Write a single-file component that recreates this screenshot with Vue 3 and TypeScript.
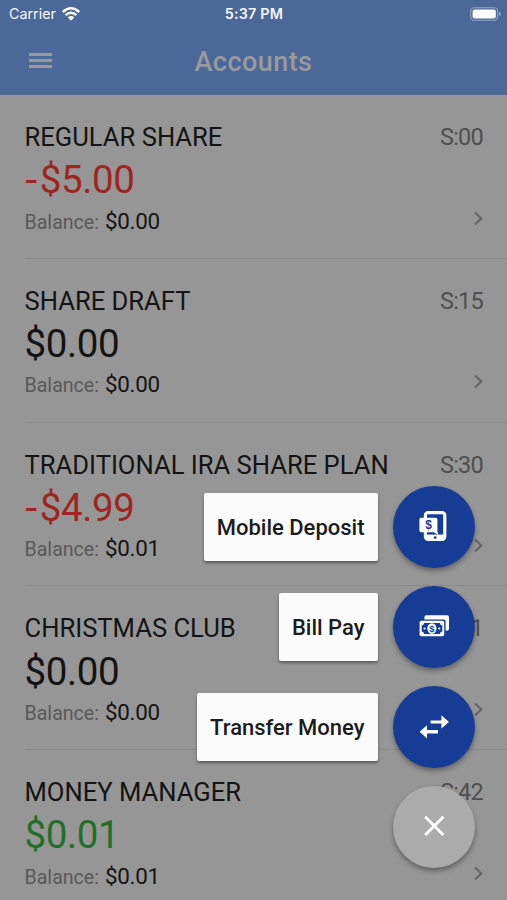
<script setup lang="ts">
interface Account {
  name: string
  suffix: string
  amount: string
  balance: string
  tone: 'neg' | 'zero' | 'pos'
}

interface Action {
  label: string
  icon: 'deposit' | 'bill' | 'transfer'
}

const accounts: Account[] = [
  { name: 'REGULAR SHARE', suffix: 'S:00', amount: '$5.00', balance: '$0.00', tone: 'neg' },
  { name: 'SHARE DRAFT', suffix: 'S:15', amount: '$0.00', balance: '$0.00', tone: 'zero' },
  { name: 'TRADITIONAL IRA SHARE PLAN', suffix: 'S:30', amount: '$4.99', balance: '$0.01', tone: 'neg' },
  { name: 'CHRISTMAS CLUB', suffix: 'S:41', amount: '$0.00', balance: '$0.00', tone: 'zero' },
  { name: 'MONEY MANAGER', suffix: 'S:42', amount: '$0.01', balance: '$0.01', tone: 'pos' },
]

const actions: Action[] = [
  { label: 'Mobile Deposit', icon: 'deposit' },
  { label: 'Bill Pay', icon: 'bill' },
  { label: 'Transfer Money', icon: 'transfer' },
]
</script>

<template>
  <div class="screen">
    <header class="header">
      <div class="status">
        <div class="carrier">
          <span>Carrier</span>
          <svg class="wifi" viewBox="0 0 18 14">
            <path d="M0.8 5 Q9 -2.4 17.2 5" />
            <path d="M3.6 8.2 Q9 3.4 14.4 8.2" />
            <path class="solid" d="M9 13.8 L5.8 10.4 Q9 7.6 12.2 10.4 Z" />
          </svg>
        </div>
        <span class="time">5:37 PM</span>
        <svg class="battery" viewBox="0 0 31 14">
          <rect class="shell" x="0.7" y="0.7" width="27" height="12.6" rx="3.6" />
          <rect class="charge" x="2.6" y="2.5" width="23.2" height="9" rx="2" />
          <path class="tip" d="M29 4.6 Q30.8 5.4 30.8 7 Q30.8 8.6 29 9.4 Z" />
        </svg>
      </div>
      <div class="toolbar">
        <button class="menu" aria-label="Menu"><i></i><i></i><i></i></button>
        <h1>Accounts</h1>
      </div>
    </header>

    <main>
      <section v-for="a in accounts" :key="a.name" class="row">
        <div class="line">
          <span class="name">{{ a.name }}</span>
          <span class="suffix">{{ a.suffix }}</span>
        </div>
        <div class="amount" :class="a.tone"><span v-if="a.tone === 'neg'" class="minus">-</span>{{ a.amount }}</div>
        <div class="line balance">
          <span><span class="label">Balance:</span><span class="value">{{ a.balance }}</span></span>
          <svg class="chevron" viewBox="0 0 9 15"><path d="M1 1.4 L7.2 7.5 L1 13.6" /></svg>
        </div>
      </section>
    </main>

    <div class="dial">
      <div v-for="x in actions" :key="x.label" class="action">
        <span class="tag">{{ x.label }}</span>
        <button class="fab" :aria-label="x.label">
          <svg v-if="x.icon === 'deposit'" viewBox="0 0 30 32">
            <rect class="frame" x="6.4" y="1.6" width="19.4" height="26.8" rx="2.6" />
            <path class="fill" d="M5.4 23.6 H27 V27 H5.4 Z" />
            <circle class="hole" cx="16.2" cy="26.6" r="1.4" />
            <path class="fill" d="M2 6.8 H16.4 Q18.4 6.8 18.4 8.6 V20.4 L19.4 24 L14.8 21.2 H2 Q0.4 21.2 0.4 19.6 V8.4 Q0.4 6.8 2 6.8 Z" />
            <text x="9.6" y="18.2" class="dollar">$</text>
          </svg>
          <svg v-else-if="x.icon === 'bill'" viewBox="0 0 30 32">
            <path class="fill" d="M7.4 4.2 H28 Q30 4.2 30 6.2 V17.8 Q30 19.8 27.6 19.8 H26.6 V10.2 Q26.6 8.4 24.8 8.4 H5.4 V6.2 Q5.4 4.2 7.4 4.2 Z" />
            <rect class="fill" x="0.6" y="9.8" width="24.6" height="15.4" rx="1.8" />
            <path class="hole" d="M5 12 H21 Q21 14.2 23.3 14.6 V20.6 Q21 20.8 21 23 H5 Q5 20.8 2.7 20.6 V14.6 Q5 14.2 5 12 Z" />
            <ellipse class="fill" cx="12.9" cy="17.5" rx="4.6" ry="5.2" />
            <circle class="fill" cx="5.6" cy="17.5" r="1.1" />
            <circle class="fill" cx="20.2" cy="17.5" r="1.1" />
            <text x="12.9" y="21" class="dollar small">$</text>
          </svg>
          <svg v-else viewBox="0 0 30 32">
            <path class="fill" d="M11.6 9.4 H22.4 V4.2 L30 11 L22.4 17.6 V12.6 H11.6 Z" />
            <path class="fill" d="M19 19 H8 V14.2 L0.6 20.8 L8 27.4 V22.4 H19 Z" />
          </svg>
        </button>
      </div>
      <div class="action">
        <button class="fab close" aria-label="Close">
          <svg viewBox="0 0 30 32"><path d="M6.2 5.8 L24.4 24 M24.4 5.8 L6.2 24" /></svg>
        </button>
      </div>
    </div>
  </div>
</template>

<style>
body {
  margin: 0;
  background: #969696;
}
</style>

<style scoped>
.screen {
  position: relative;
  width: 507px;
  height: 900px;
  overflow: hidden;
  background: #969696;
  font-family: Roboto, sans-serif;
}
button {
  border: 0;
  padding: 0;
  background: none;
}
.header {
  height: 95px;
  background: #4b6898;
}
.status {
  display: grid;
  grid-template-columns: 1fr auto 1fr;
  align-items: center;
  height: 27px;
  padding: 0 6px 0 9px;
  font-family: Inter, sans-serif;
  font-size: 14.3px;
  color: #f4f7fd;
}
.carrier {
  display: flex;
  align-items: center;
  gap: 6px;
}
.wifi {
  width: 18px;
  height: 14px;
  fill: none;
  stroke: #fff;
  stroke-width: 2.4;
}
.wifi .solid {
  fill: #fff;
  stroke: none;
}
.time {
  font-weight: 600;
  font-size: 14.3px;
  letter-spacing: 0.2px;
  margin-right: 2px;
}
.battery {
  justify-self: end;
  width: 31px;
  height: 14px;
}
.shell {
  fill: none;
  stroke: #93a4c2;
  stroke-width: 1.1;
}
.charge {
  fill: #fff;
}
.tip {
  fill: #93a4c2;
}
.toolbar {
  display: grid;
  grid-template-columns: 1fr auto 1fr;
  align-items: center;
  height: 70px;
  padding: 0 29px;
}
.menu {
  display: flex;
  flex-direction: column;
  gap: 3px;
  width: 23px;
  margin-top: -4px;
}
.menu i {
  height: 3px;
  background: #999a9e;
}
h1 {
  margin: 0;
  font-size: 27px;
  line-height: 34px;
  font-weight: 500;
  letter-spacing: 0.45px;
  color: #999a9c;
}
.row {
  box-sizing: border-box;
  height: 163.75px;
  margin-left: 24.5px;
  padding: 25.2px 24px 0 0;
  border-bottom: 1px solid #8a8a8a;
}
.line {
  display: flex;
  justify-content: space-between;
}
.name,
.suffix {
  font-size: 25.6px;
  line-height: 34px;
  color: #141414;
}
.suffix {
  font-size: 23.5px;
  letter-spacing: -0.75px;
  color: #4f4f4f;
}
.amount {
  margin-top: 3.3px;
  font-size: 38.5px;
  line-height: 46px;
  letter-spacing: -0.4px;
}
.minus {
  display: inline-block;
  margin: 0 4px 0 1px;
  transform: scaleX(1.1);
}
.neg {
  color: #9f2620;
}
.zero {
  color: #141414;
}
.pos {
  color: #226f27;
}
.balance {
  margin-top: 3.2px;
  line-height: 28px;
}
.label {
  margin-right: 6px;
  font-size: 19.6px;
  color: #595959;
}
.value {
  font-size: 22.4px;
  letter-spacing: -0.3px;
  color: #141414;
}
.chevron {
  width: 9px;
  height: 15px;
  margin-top: 4px;
  fill: none;
  stroke: #666;
  stroke-width: 2.1;
}
.dial {
  position: absolute;
  right: 32px;
  bottom: 32px;
  display: flex;
  flex-direction: column;
  align-items: flex-end;
  gap: 18px;
}
.action {
  display: flex;
  align-items: center;
  gap: 15.5px;
}
.tag {
  box-sizing: border-box;
  height: 67.5px;
  padding: 0 13px;
  border-radius: 2px;
  background: #fbfbfb;
  box-shadow: 0 2px 3px rgba(0, 0, 0, 0.4);
  font-size: 22px;
  line-height: 69px;
  font-weight: 500;
  color: #1c1c1c;
}
.fab {
  display: flex;
  align-items: center;
  justify-content: center;
  width: 82px;
  height: 82px;
  border-radius: 50%;
  background: #163c96;
  box-shadow: 0 3px 5px rgba(0, 0, 0, 0.35);
}
.fab svg {
  width: 30px;
  height: 32px;
  overflow: visible;
}
.fill {
  fill: #fff;
}
.hole {
  fill: #163c96;
}
.frame {
  fill: none;
  stroke: #fff;
  stroke-width: 3.2;
}
.dollar {
  font-size: 12px;
  font-weight: 700;
  text-anchor: middle;
  fill: #163c96;
}
.small {
  font-size: 9.5px;
}
.close {
  background: #ababab;
}
.close path {
  fill: none;
  stroke: #fff;
  stroke-width: 2.9;
}
</style>
